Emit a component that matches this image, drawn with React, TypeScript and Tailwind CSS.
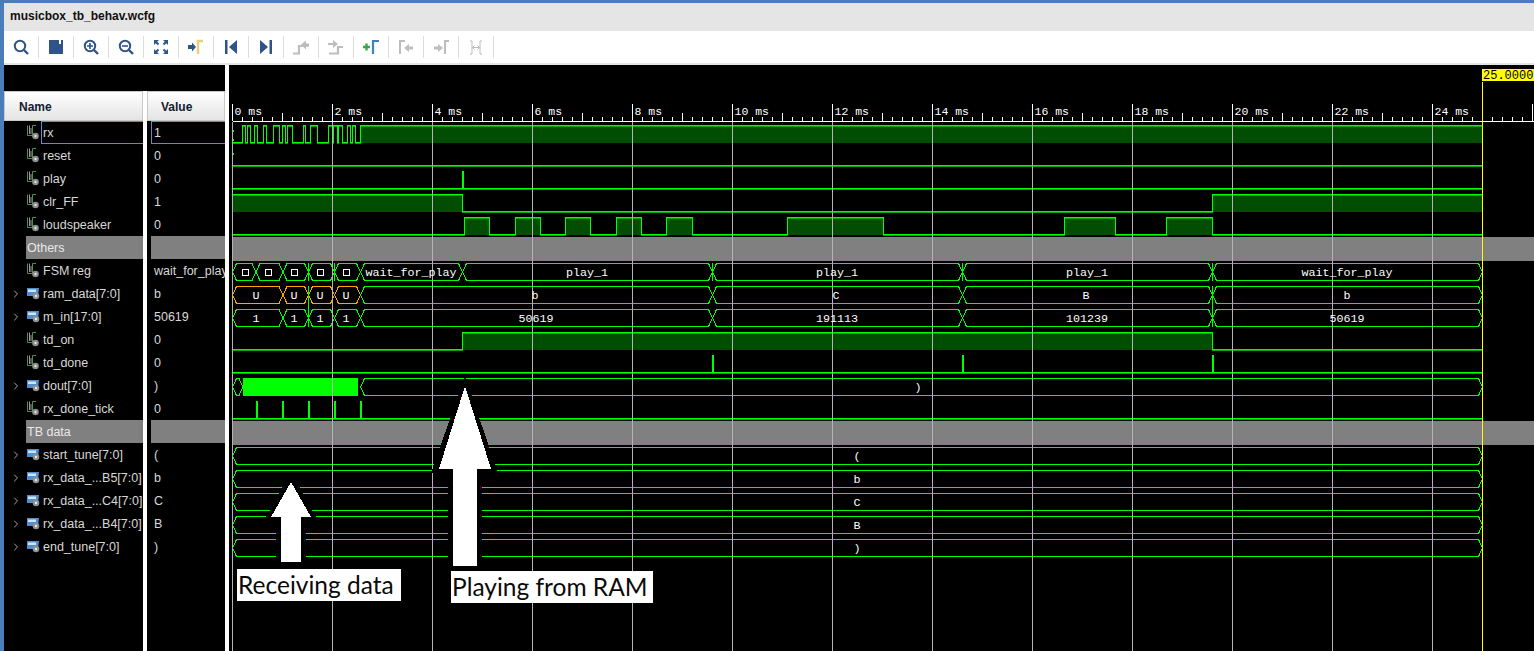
import React from 'react';
import { ChevronRight } from 'lucide-react';

type Row = { name: string; value: string; kind: 'sig' | 'bus' | 'band'; selected?: boolean };

const ROWS: Row[] = [
    { name: 'rx', value: '1', kind: 'sig', selected: true },
    { name: 'reset', value: '0', kind: 'sig' },
    { name: 'play', value: '0', kind: 'sig' },
    { name: 'clr_FF', value: '1', kind: 'sig' },
    { name: 'loudspeaker', value: '0', kind: 'sig' },
    { name: 'Others', value: '', kind: 'band' },
    { name: 'FSM reg', value: 'wait_for_play', kind: 'sig' },
    { name: 'ram_data[7:0]', value: 'b', kind: 'bus' },
    { name: 'm_in[17:0]', value: '50619', kind: 'bus' },
    { name: 'td_on', value: '0', kind: 'sig' },
    { name: 'td_done', value: '0', kind: 'sig' },
    { name: 'dout[7:0]', value: ')', kind: 'bus' },
    { name: 'rx_done_tick', value: '0', kind: 'sig' },
    { name: 'TB data', value: '', kind: 'band' },
    { name: 'start_tune[7:0]', value: '(', kind: 'bus' },
    { name: 'rx_data_...B5[7:0]', value: 'b', kind: 'bus' },
    { name: 'rx_data_...C4[7:0]', value: 'C', kind: 'bus' },
    { name: 'rx_data_...B4[7:0]', value: 'B', kind: 'bus' },
    { name: 'end_tune[7:0]', value: ')', kind: 'bus' },
];

const GREEN = '#00ff00';
const DIM = '#00a800';
const END = 1482.5;
const START = 232.5;

// Row tops in the wave area
const top = (i: number) => 125.5 + 23 * i;
const bot = (i: number) => 142.5 + 23 * i;

const RX_HIGHS: [number, number][] = [
    [242, 245], [247, 250], [254, 257], [263, 266], [273, 279], [282, 285], [287, 292],
    [303, 305], [310, 317], [328, 332], [333, 337], [338, 342], [347, 350], [352, 355], [360, END],
];
const SPEAKER_HIGHS: [number, number][] = [
    [464.5, 489.5], [515.5, 540.5], [565.5, 590.5], [616.5, 641.5], [666.5, 692.5],
    [787.5, 883.5], [1064.5, 1115.5], [1166.5, 1212.5],
];

// Path of a one-bit signal from its high intervals
function digitalPath(i: number, highs: [number, number][]) {
    const startsHigh = highs.length > 0 && highs[0][0] <= START;
    let d = startsHigh ? '' : `M${START} ${bot(i)}`;
    let x = START;
    highs.forEach(([a, b], n) => {
        if (startsHigh && n === 0) {
            d += `M${a} ${top(i)}H${b}V${bot(i)}`;
        } else {
            d += `H${a}V${top(i)}H${b}V${bot(i)}`;
        }
        x = b;
    });
    if (x < END) d += `H${END}`;
    return d;
}

function Digital({ row, highs }: { row: number; highs: [number, number][] }) {
    const d = digitalPath(row, highs);
    return (
        <g>
            {highs
                .filter(([a, b]) => b - a > 10)
                .map(([a, b]) => (
                    <rect key={a} x={a} y={top(row)} width={b - a} height={17} fill="#014d01" />
                ))}
            <path d={d} fill="none" stroke={DIM} transform="translate(0 1)" />
            <path d={d} fill="none" stroke={GREEN} />
        </g>
    );
}

function Bus({ row, points, color = GREEN }: { row: number; points: number[]; color?: string }) {
    const t = top(row);
    const b = bot(row);
    const m = (t + b) / 2;
    return (
        <g>
            {points.slice(0, -1).map((p, n) => {
                const q = points[n + 1];
                return (
                    <path
                        key={p}
                        d={`M${p} ${m}L${p + 4} ${t}H${q - 4}L${q} ${m}L${q - 4} ${b}H${p + 4}Z`}
                        fill="none"
                        stroke={color}
                    />
                );
            })}
        </g>
    );
}

function Label({ x, row, children }: { x: number; row: number; children: string }) {
    return (
        <text
            x={x}
            y={top(row) + 12.5}
            textAnchor="middle"
            className="fill-white font-['Liberation_Mono',monospace] text-[11.7px]"
        >
            {children}
        </text>
    );
}

function Waves() {
    const ticks = [];
    for (let x = START; x <= 1534; x += 10) {
        const k = Math.round((x - START) / 10);
        const h = k % 10 === 0 ? 17 : k % 5 === 0 ? 8 : 4;
        ticks.push(<path key={x} d={`M${x} 121V${121 - h}`} stroke="#ffffff" />);
    }
    const grid = [];
    for (let k = 0; k <= 12; k++) {
        grid.push(<path key={k} d={`M${START + 100 * k} 122V651`} stroke="#b4b4b4" />);
    }
    const fsm = [232.5, 256, 283, 308.5, 334.5, 360.5, 462.5, 712.5, 962.5, 1212.5, END];
    const ram = [232.5, 283, 308.5, 334.5, 360.5];
    const tail = [360.5, 712.5, 962.5, 1212.5, END];
    return (
        <svg viewBox="229 65 1305 586" width={1305} height={586} className="block" shapeRendering="crispEdges">
            {/* group bands */}
            <rect x={233} y={237} width={1301} height={24} fill="#808080" />
            <rect x={233} y={421} width={1301} height={24} fill="#808080" />

            {/* time axis */}
            <path d="M233 121.5H1534" stroke="#ffffff" />
            {ticks}
            {[0, 2, 4, 6, 8, 10, 12, 14, 16, 18, 20, 22, 24].map((ms) => (
                <text key={ms} x={234.5 + 50 * ms} y={115} className="fill-white font-['Liberation_Mono',monospace] text-[11.5px]">
                    {ms} ms
                </text>
            ))}

            {/* one-bit signals */}
            <rect x={233} y={130} width={1} height={2} fill={GREEN} />
            <rect x={233} y={139} width={1} height={2} fill={GREEN} />
            <rect x={233} y={153} width={1} height={2} fill={GREEN} />
            <Digital row={0} highs={RX_HIGHS} />
            <Digital row={1} highs={[]} />
            <Digital row={2} highs={[]} />
            <rect x={462} y={171} width={2} height={17} fill={GREEN} />
            <Digital row={3} highs={[[START, 462.5], [1212.5, END]]} />
            <Digital row={4} highs={SPEAKER_HIGHS} />
            <Digital row={9} highs={[[462.5, 1212.5]]} />
            <Digital row={10} highs={[]} />
            {[713, 963, 1213].map((x) => (
                <rect key={x} x={x - 1} y={355} width={2} height={17} fill={GREEN} />
            ))}
            <Digital row={12} highs={[]} />
            {[257, 283, 309, 335, 361].map((x) => (
                <rect key={x} x={x - 1} y={401} width={2} height={17} fill={GREEN} />
            ))}

            {/* buses */}
            <Bus row={6} points={fsm} />
            <Bus row={7} points={ram} color="#ffa500" />
            <Bus row={7} points={tail} />
            <Bus row={8} points={ram} />
            <Bus row={8} points={tail} />
            <Bus row={11} points={[232.5, 243]} />
            <rect x={243} y={378} width={115} height={18} fill={GREEN} />
            <Bus row={11} points={[360.5, END]} />
            {[14, 15, 16, 17, 18].map((r) => (
                <Bus key={r} row={r} points={[232.5, END]} />
            ))}
            {[308.5, 334.5, 712.5, 962.5, 1212.5].map((x) => (
                <path key={x} d={`M${x} 263V281`} stroke={GREEN} />
            ))}
            {[308.5, 1212.5].map((x) => (
                <path key={x} d={`M${x} 286V327`} stroke={GREEN} />
            ))}

            {grid}

            {/* bus values */}
            {[245, 268, 294, 320, 346].map((x) => (
                <rect key={x} x={x - 3} y={269} width={6} height={6} fill="none" stroke="#ffffff" />
            ))}
            <Label x={411} row={6}>wait_for_play</Label>
            <Label x={587} row={6}>play_1</Label>
            <Label x={837} row={6}>play_1</Label>
            <Label x={1087} row={6}>play_1</Label>
            <Label x={1347} row={6}>wait_for_play</Label>
            {[256, 294, 320, 346].map((x) => (
                <Label key={x} x={x} row={7}>U</Label>
            ))}
            <Label x={535} row={7}>b</Label>
            <Label x={836} row={7}>C</Label>
            <Label x={1086} row={7}>B</Label>
            <Label x={1347} row={7}>b</Label>
            {[256, 294, 320, 346].map((x) => (
                <Label key={x} x={x} row={8}>1</Label>
            ))}
            <Label x={536} row={8}>50619</Label>
            <Label x={837} row={8}>191113</Label>
            <Label x={1087} row={8}>101239</Label>
            <Label x={1347} row={8}>50619</Label>
            <Label x={918} row={11}>)</Label>
            <Label x={857} row={14}>(</Label>
            <Label x={857} row={15}>b</Label>
            <Label x={857} row={16}>C</Label>
            <Label x={857} row={17}>B</Label>
            <Label x={857} row={18}>)</Label>

            {/* cursor */}
            <path d="M1482.5 82V651" stroke="#ffff00" />
            <rect x={1482} y={69} width={52} height={12} fill="#ffff00" />
            <text x={1483} y={79} className="fill-black font-['Liberation_Mono',monospace] text-[12px]">25.00000</text>

            {/* annotation arrows */}
            <polygon points="465,376 498,473 482,473 482,572 448,572 448,473 431,473" fill="#000000" />
            <polygon points="465,386 491,469 477,469 477,566 453,566 453,469 439,469" fill="#ffffff" />
            <polygon points="291,472 318,521 306,521 306,568 276,568 276,521 264,521" fill="#000000" />
            <polygon points="291,482 311,517 301,517 301,562 281,562 281,517 271,517" fill="#ffffff" />
        </svg>
    );
}

function SignalIcon({ kind }: { kind: 'sig' | 'bus' }) {
    if (kind === 'bus') {
        return (
            <svg width="13" height="13" viewBox="0 0 13 13">
                <path d="M0 1h12l-1 8H0z" fill="#4f8fd0" />
                <path d="M1 2.500h8v2.500H1z" fill="#cfe4f8" />
                <circle cx="9" cy="9" r="3.300" fill="#909090" />
                <circle cx="9" cy="9" r="1.200" fill="#e8e8e8" />
            </svg>
        );
    }
    return (
        <svg width="13" height="15" viewBox="0 0 13 15">
            <path d="M0.500 0.500V10.500H5.500V0.500H9" fill="none" stroke="#4f8f4f" />
            <path d="M2.500 0.500V9M4 3V9" fill="none" stroke="#9a9a9a" />
            <circle cx="8.500" cy="11" r="3.300" fill="#8c8c8c" />
            <circle cx="8.500" cy="11" r="1.200" fill="#e0e0e0" />
        </svg>
    );
}

const NAVY = '#2f5487';
const FADE = '#bdbdbd';

function ToolIcon({ children }: { children: React.ReactNode }) {
    return (
        <div className="flex h-[22px] w-[35px] items-center justify-center border-r border-[#dcdcdc]">
            <svg width="18" height="18" viewBox="0 0 18 18">
                {children}
            </svg>
        </div>
    );
}

function Toolbar() {
    return (
        <div className="flex h-[32px] items-center bg-white">
            <ToolIcon>
                <circle cx="8" cy="8" r="5.200" fill="none" stroke={NAVY} strokeWidth="2" />
                <path d="M12 12l4 4" stroke={NAVY} strokeWidth="2.400" />
            </ToolIcon>
            <ToolIcon>
                <path d="M2 2h10v4h2V2h2v14H2z" fill={NAVY} />
            </ToolIcon>
            <ToolIcon>
                <circle cx="8" cy="8" r="5.200" fill="none" stroke={NAVY} strokeWidth="2" />
                <path d="M12 12l4 4" stroke={NAVY} strokeWidth="2.400" />
                <path d="M5 8h6M8 5v6" stroke={NAVY} strokeWidth="1.600" />
            </ToolIcon>
            <ToolIcon>
                <circle cx="8" cy="8" r="5.200" fill="none" stroke={NAVY} strokeWidth="2" />
                <path d="M12 12l4 4" stroke={NAVY} strokeWidth="2.400" />
                <path d="M5 8h6" stroke={NAVY} strokeWidth="1.600" />
            </ToolIcon>
            <ToolIcon>
                <path d="M2 2h5L5.200 3.800l2 2-1.400 1.400-2-2L2 7zM16 2v5l-1.800-1.800-2 2-1.400-1.400 2-2L11 2zM2 16v-5l1.800 1.800 2-2 1.400 1.400-2 2L7 16zM16 16h-5l1.800-1.800-2-2 1.400-1.400 2 2L16 11z" fill={NAVY} />
            </ToolIcon>
            <ToolIcon>
                <path d="M1 7h4V4.500L9 9l-4 4.500V11H1z" fill={NAVY} />
                <path d="M11 16V3h5" fill="none" stroke="#e9cf78" strokeWidth="2.400" />
            </ToolIcon>
            <ToolIcon>
                <path d="M3 2h2.500v14H3zM15 2v14L7 9z" fill={NAVY} />
            </ToolIcon>
            <ToolIcon>
                <path d="M15 2h-2.500v14H15zM3 2v14l8-7z" fill={NAVY} />
            </ToolIcon>
            <ToolIcon>
                <path d="M1 15.500h6V8h9" fill="none" stroke={FADE} strokeWidth="2.200" />
                <path d="M9 6.500l5-4v3h3v3h-3v3z" fill={FADE} />
            </ToolIcon>
            <ToolIcon>
                <path d="M2 15.500h9V9h5" fill="none" stroke={FADE} strokeWidth="2.200" />
                <path d="M1 5h5V2l5 4-5 4V7H1z" fill={FADE} />
            </ToolIcon>
            <ToolIcon>
                <path d="M1 9h7M4.500 5.500v7" stroke="#3aa64a" strokeWidth="2.400" />
                <path d="M11 16V3h6" fill="none" stroke="#3d85b8" strokeWidth="2.200" />
            </ToolIcon>
            <ToolIcon>
                <path d="M3 16V3h5" fill="none" stroke={FADE} strokeWidth="2" />
                <path d="M7 10l5-4v2.500h4v3h-4V14z" fill={FADE} />
            </ToolIcon>
            <ToolIcon>
                <path d="M2 8.500h4V6l5 4-5 4v-2.500H2z" fill={FADE} />
                <path d="M13 16V3h4" fill="none" stroke={FADE} strokeWidth="2" />
            </ToolIcon>
            <ToolIcon>
                <path d="M3 3h2v13H3M15 3h-2v13h2" fill="none" stroke={FADE} />
                <path d="M5 9.500h8M5.500 9.500l2-2M5.500 9.500l2 2M12.500 9.500l-2-2M12.500 9.500l-2 2" stroke={FADE} />
            </ToolIcon>
        </div>
    );
}

export default function App() {
    return (
        <div className="flex h-[651px] w-[1534px] flex-col overflow-hidden border-t-[3px] border-l-4 border-[#4a7ebb] bg-white font-['Liberation_Sans',sans-serif]">
            <div className="flex h-[28px] items-center bg-[#e5e5e5] pb-[2px] pl-[6px] text-[12px] font-bold text-[#101010]">
                musicbox_tb_behav.wcfg
            </div>
            <Toolbar />
            <div className="h-[2px] bg-[#e5e5e5]" />

            <div className="relative flex flex-1">
                <div className="flex w-[221px] flex-col bg-black">
                    <div className="h-[26px]" />
                    <div className="flex flex-1">
                        {/* Name column */}
                        <div className="w-[139px] shrink-0">
                            <div className="flex h-[30px] items-center border border-[#c8c8c8] bg-gradient-to-b from-white to-[#e4e4e4] pl-[14px] pt-[2px] text-[12px] font-bold text-[#102030]">
                                Name
                            </div>
                            {ROWS.map((row) =>
                                row.kind === 'band' ? (
                                    <div key={row.name} className="ml-[22px] flex h-[23px] items-center bg-[#808080] pl-[1px] pt-[1px] text-[12.5px] text-[#e8e8e8]">
                                        {row.name}
                                    </div>
                                ) : (
                                    <div key={row.name} className="flex h-[23px] items-center">
                                        <div className="flex w-[23px] shrink-0 justify-end pr-[2px]">
                                            {row.kind === 'bus' && <ChevronRight size={12} className="mr-[3px] text-[#a8a8a8]" />}
                                        </div>
                                        <div className="flex w-[14px] shrink-0 items-center">
                                            <SignalIcon kind={row.kind === 'bus' ? 'bus' : 'sig'} />
                                        </div>
                                        <div
                                            className={`flex h-full min-w-0 flex-1 items-center whitespace-nowrap border border-r-0 pl-[1px] pt-[1px] text-[12.5px] text-[#d8d8d8] ${
                                                row.selected ? 'border-[#5b8fc0]' : 'border-transparent'
                                            }`}
                                        >
                                            {row.name}
                                        </div>
                                    </div>
                                )
                            )}
                        </div>
                        <div className="w-1 shrink-0 bg-white" />
                        {/* Value column */}
                        <div className="min-w-0 flex-1">
                            <div className="flex h-[30px] items-center border border-[#c8c8c8] bg-gradient-to-b from-white to-[#e4e4e4] pl-[13px] pt-[2px] text-[12px] font-bold text-[#102030]">
                                Value
                            </div>
                            {ROWS.map((row) =>
                                row.kind === 'band' ? (
                                    <div key={row.name} className="ml-1 h-[23px] bg-[#808080]" />
                                ) : (
                                    <div
                                        key={row.name}
                                        className={`ml-1 flex h-[23px] items-center overflow-hidden whitespace-nowrap border border-r-0 pl-[2px] pt-[1px] text-[12.5px] text-[#d8d8d8] ${
                                            row.selected ? 'border-[#5b8fc0]' : 'border-transparent'
                                        }`}
                                    >
                                        {row.value}
                                    </div>
                                )
                            )}
                        </div>
                    </div>
                </div>
                <div className="w-1 bg-white" />
                <div className="relative flex-1 bg-black">
                    <Waves />
                    {/* annotations over the waves */}
                    <div className="absolute left-[8px] top-[504px] flex h-[32px] w-[164px] items-center whitespace-nowrap bg-white pl-[1px] font-['Lato',sans-serif] text-[24.5px] leading-none text-[#0a0a0a]">
                        Receiving data
                    </div>
                    <div className="absolute left-[222px] top-[506px] flex h-[32px] w-[202px] items-center whitespace-nowrap bg-white pl-[1px] font-['Lato',sans-serif] text-[24.5px] leading-none text-[#0a0a0a]">
                        Playing from RAM
                    </div>
                </div>
            </div>
        </div>
    );
}
